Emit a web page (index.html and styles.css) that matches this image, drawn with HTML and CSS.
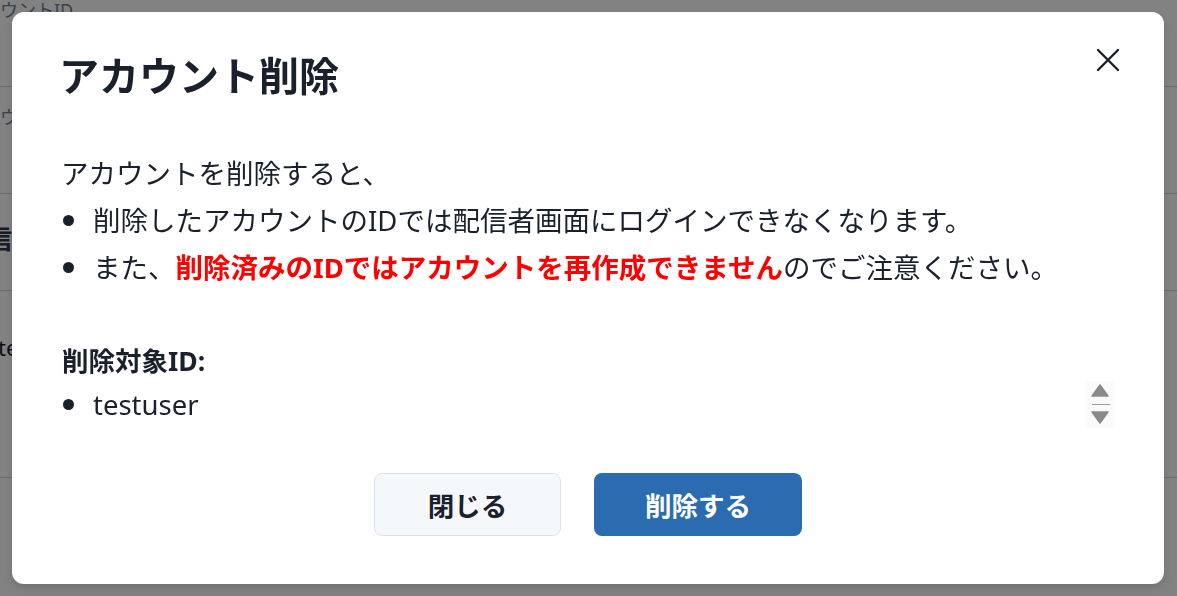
FILE: index.html
```html
<!DOCTYPE html>
<html lang="ja">
<head>
    <meta charset="UTF-8">
    <meta name="viewport" content="width=device-width, initial-scale=1.0">
    <title>アカウント削除</title>
    <link rel="stylesheet" href="styles.css">
</head>
<body>
    <div class="page">
        <div class="row row-1"><span class="cell cell-label">アカウントID</span></div>
        <div class="row row-2"><span class="cell cell-label">アカウント名</span></div>
        <div class="row row-3"><span class="cell cell-head">配信者</span></div>
        <div class="row row-4"><span class="cell cell-value">testuser</span></div>
        <div class="row row-5"></div>
    </div>

    <div id="overlay"></div>

    <div id="delete-modal">
        <button class="close-btn" aria-label="閉じる">
            <svg width="24" height="24" viewBox="0 0 24 24">
                <path d="M2 2 L22 22 M22 2 L2 22" stroke="#1a202c" stroke-width="2.4" stroke-linecap="round" fill="none"/>
            </svg>
        </button>

        <h2 class="modal-title">アカウント削除</h2>

        <div class="modal-body">
            <p>アカウントを削除すると、</p>
            <ul class="notes">
                <li>削除したアカウントのIDでは配信者画面にログインできなくなります。</li>
                <li>また、<strong class="warn">削除済みのIDではアカウントを再作成できません</strong>のでご注意ください。</li>
            </ul>

            <h3 class="target-title">削除対象ID:</h3>
            <div class="target-box">
                <ul class="target-list">
                    <li>testuser</li>
                </ul>
                <div class="scrollbar">
                    <svg width="28" height="47" viewBox="0 0 28 47">
                        <path d="M14 4 L22 15 L6 15 Z" fill="#8a8a8a" stroke="#8a8a8a" stroke-width="1.5" stroke-linejoin="round"/>
                        <line x1="6" y1="23.5" x2="24" y2="23.5" stroke="#9a9a9a" stroke-width="1"/>
                        <path d="M6 31 L22 31 L14 42 Z" fill="#8a8a8a" stroke="#8a8a8a" stroke-width="1.5" stroke-linejoin="round"/>
                    </svg>
                </div>
            </div>
        </div>

        <div class="modal-footer">
            <button class="btn btn-close">閉じる</button>
            <button class="btn btn-delete">削除する</button>
        </div>
    </div>
</body>
</html>
```

FILE: styles.css
```css
body {
    margin: 0;
    padding: 0;
    font-family: "Noto Sans", "Noto Sans CJK JP", sans-serif;
    background: #fff;
    color: #1a202c;
    overflow: hidden;
}

.page {
    height: 596px;
    overflow: hidden;
}

.row {
    border-bottom: 1px solid #cbd5e0;
    box-sizing: border-box;
}

.row-1 {
    height: 87px;
}

.row-2 {
    height: 107px;
    padding-top: 20px;
}

.row-3 {
    height: 97px;
    padding-top: 30px;
}

.row-4 {
    height: 187px;
    padding-top: 42px;
}

.row-5 {
    border-bottom: none;
}

.cell {
    display: block;
    white-space: nowrap;
}

.cell-label {
    font-size: 18px;
    line-height: 20px;
    color: #718096;
    margin-left: -36px;
}

.cell-head {
    font-size: 26px;
    line-height: 30px;
    font-weight: 700;
    color: #2d3748;
    margin-left: -40px;
}

.cell-value {
    font-size: 22px;
    line-height: 28px;
    color: #1a202c;
    margin-left: -2px;
}

#overlay {
    position: fixed;
    top: 0;
    left: 0;
    width: 100%;
    height: 100%;
    background: rgba(0, 0, 0, 0.49);
    z-index: 999;
}

#delete-modal {
    position: fixed;
    top: 12px;
    left: 12px;
    width: 1152px;
    height: 572px;
    box-sizing: border-box;
    padding: 40px 50px 48px;
    background: #fff;
    border-radius: 12px;
    box-shadow: 0 4px 10px rgba(0, 0, 0, 0.15);
    z-index: 1000;
    display: flex;
    flex-direction: column;
}

.close-btn {
    position: absolute;
    top: 36px;
    right: 44px;
    width: 24px;
    height: 24px;
    padding: 0;
    border: none;
    background: none;
    cursor: pointer;
}

.close-btn svg {
    display: block;
}

.modal-title {
    margin: 0 0 0 -3px;
    font-size: 40px;
    line-height: 48px;
    font-weight: 700;
    color: #1a202c;
}

.modal-body {
    margin-top: 50px;
    font-size: 27.5px;
    line-height: 47px;
}

.modal-body p {
    margin: 0 0 0 -1px;
}

.modal-body ul {
    margin: 0;
    padding: 0;
    list-style: none;
}

.modal-body li {
    position: relative;
    padding-left: 31px;
}

.modal-body li::before {
    content: "";
    position: absolute;
    left: 1px;
    top: 18px;
    width: 11px;
    height: 11px;
    border-radius: 50%;
    background: #1a202c;
}

.warn {
    color: #ff0000;
    font-weight: 700;
}

.target-title {
    margin: 50px 0 0;
    font-size: 26.5px;
    line-height: 40px;
    font-weight: 700;
}

.target-box {
    display: flex;
    align-items: flex-start;
}

.target-list {
    flex: 1;
}

.scrollbar {
    width: 28px;
    height: 47px;
    background: #fafafa;
}

.scrollbar svg {
    display: block;
}

.modal-footer {
    margin-top: auto;
    display: flex;
    justify-content: center;
    gap: 33px;
}

.btn {
    height: 63px;
    font-family: "Noto Sans", "Noto Sans CJK JP", sans-serif;
    font-size: 26.5px;
    font-weight: 700;
    border-radius: 8px;
    cursor: pointer;
}

.btn-close {
    width: 187px;
    padding: 0;
    color: #1a202c;
    background: #f5f8fb;
    border: 1px solid #dde3ec;
}

.btn-delete {
    width: 208px;
    padding: 0;
    color: #fff;
    background: #2b6cb0;
    border: none;
}

.btn-delete:hover {
    background: #2c5282;
}
```
